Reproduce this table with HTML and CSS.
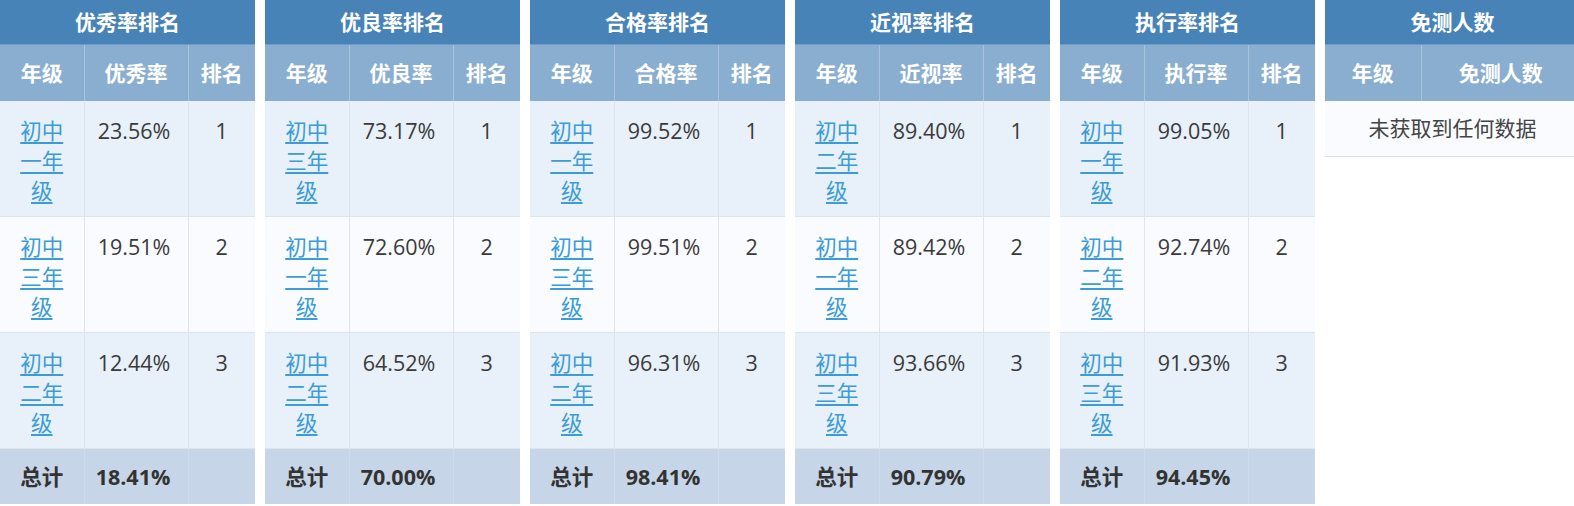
FILE: index.html
```html
<!DOCTYPE html>
<html lang="zh-CN">
<head>
<meta charset="utf-8">
<title>排名统计</title>
<link rel="stylesheet" href="styles.css">
</head>
<body>
<div class="boards">
  <table class="rank">
    <colgroup><col class="c-grade"><col class="c-rate"><col class="c-no"></colgroup>
    <thead>
      <tr class="title"><th colspan="3">优秀率排名</th></tr>
      <tr class="sub"><th>年级</th><th>优秀率</th><th>排名</th></tr>
    </thead>
    <tbody>
      <tr class="odd"><td><a href="#">初中一年级</a></td><td>23.56%</td><td>1</td></tr>
      <tr class="even"><td><a href="#">初中三年级</a></td><td>19.51%</td><td>2</td></tr>
      <tr class="odd"><td><a href="#">初中二年级</a></td><td>12.44%</td><td>3</td></tr>
      <tr class="total"><td>总计</td><td>18.41%</td><td></td></tr>
    </tbody>
  </table>
  <table class="rank">
    <colgroup><col class="c-grade"><col class="c-rate"><col class="c-no"></colgroup>
    <thead>
      <tr class="title"><th colspan="3">优良率排名</th></tr>
      <tr class="sub"><th>年级</th><th>优良率</th><th>排名</th></tr>
    </thead>
    <tbody>
      <tr class="odd"><td><a href="#">初中三年级</a></td><td>73.17%</td><td>1</td></tr>
      <tr class="even"><td><a href="#">初中一年级</a></td><td>72.60%</td><td>2</td></tr>
      <tr class="odd"><td><a href="#">初中二年级</a></td><td>64.52%</td><td>3</td></tr>
      <tr class="total"><td>总计</td><td>70.00%</td><td></td></tr>
    </tbody>
  </table>
  <table class="rank">
    <colgroup><col class="c-grade"><col class="c-rate"><col class="c-no"></colgroup>
    <thead>
      <tr class="title"><th colspan="3">合格率排名</th></tr>
      <tr class="sub"><th>年级</th><th>合格率</th><th>排名</th></tr>
    </thead>
    <tbody>
      <tr class="odd"><td><a href="#">初中一年级</a></td><td>99.52%</td><td>1</td></tr>
      <tr class="even"><td><a href="#">初中三年级</a></td><td>99.51%</td><td>2</td></tr>
      <tr class="odd"><td><a href="#">初中二年级</a></td><td>96.31%</td><td>3</td></tr>
      <tr class="total"><td>总计</td><td>98.41%</td><td></td></tr>
    </tbody>
  </table>
  <table class="rank">
    <colgroup><col class="c-grade"><col class="c-rate"><col class="c-no"></colgroup>
    <thead>
      <tr class="title"><th colspan="3">近视率排名</th></tr>
      <tr class="sub"><th>年级</th><th>近视率</th><th>排名</th></tr>
    </thead>
    <tbody>
      <tr class="odd"><td><a href="#">初中二年级</a></td><td>89.40%</td><td>1</td></tr>
      <tr class="even"><td><a href="#">初中一年级</a></td><td>89.42%</td><td>2</td></tr>
      <tr class="odd"><td><a href="#">初中三年级</a></td><td>93.66%</td><td>3</td></tr>
      <tr class="total"><td>总计</td><td>90.79%</td><td></td></tr>
    </tbody>
  </table>
  <table class="rank">
    <colgroup><col class="c-grade"><col class="c-rate"><col class="c-no"></colgroup>
    <thead>
      <tr class="title"><th colspan="3">执行率排名</th></tr>
      <tr class="sub"><th>年级</th><th>执行率</th><th>排名</th></tr>
    </thead>
    <tbody>
      <tr class="odd"><td><a href="#">初中一年级</a></td><td>99.05%</td><td>1</td></tr>
      <tr class="even"><td><a href="#">初中二年级</a></td><td>92.74%</td><td>2</td></tr>
      <tr class="odd"><td><a href="#">初中三年级</a></td><td>91.93%</td><td>3</td></tr>
      <tr class="total"><td>总计</td><td>94.45%</td><td></td></tr>
    </tbody>
  </table>
  <table class="rank exempt">
    <colgroup><col class="c-grade2"><col class="c-count"></colgroup>
    <thead>
      <tr class="title"><th colspan="2">免测人数</th></tr>
      <tr class="sub"><th>年级</th><th>免测人数</th></tr>
    </thead>
    <tbody>
      <tr class="empty"><td colspan="2">未获取到任何数据</td></tr>
    </tbody>
  </table>
</div>
</body>
</html>
```
FILE: styles.css
```css
html, body {
  margin: 0;
  padding: 0;
  background: #ffffff;
}

body {
  font-family: "Open Sans", "Noto Sans CJK SC", sans-serif;
  font-size: 21px;
  color: #3a3a3a;
  overflow: hidden;
}

.boards {
  display: flex;
  align-items: flex-start;
  gap: 10px;
  width: 1600px;
}

.rank {
  flex: 0 0 255px;
  width: 255px;
  table-layout: fixed;
  border-collapse: collapse;
  border-spacing: 0;
}

.c-grade { width: 84px; }
.c-rate { width: 104px; }
.c-no { width: 67px; }
.c-grade2 { width: 96px; }
.c-count { width: 159px; }

.rank th,
.rank td {
  text-align: center;
  padding: 0;
}

.title th {
  height: 44px;
  background: #4883b8;
  color: #ffffff;
  font-weight: 700;
  border-bottom: 1px solid #6f9cc6;
  line-height: 44px;
}

.sub th {
  height: 56px;
  background: #8aaed0;
  color: #ffffff;
  font-weight: 700;
  border-left: 1px solid #a8c3dd;
  line-height: 56px;
}

.sub th:first-child {
  border-left: none;
}

.odd td,
.even td {
  height: 90px;
  padding: 15px 19px 10px;
  line-height: 30px;
  font-size: 21.5px;
  vertical-align: top;
  border-left: 1px solid #dde4ec;
  border-bottom: 1px solid #dde4ec;
}

.odd td:nth-child(2),
.even td:nth-child(2) {
  padding-left: 4px;
  padding-right: 8px;
}

.odd td:first-child,
.even td:first-child {
  border-left: none;
}

.odd td { background: #e8f0f9; }
.even td { background: #f9fbfe; }

.rank a {
  color: #3b9cd6;
  text-decoration: underline;
  text-underline-offset: 3px;
}

.total td {
  height: 55px;
  background: #c6d6e8;
  font-weight: 700;
  color: #333333;
  line-height: 55px;
  font-size: 21.5px;
  border-left: 1px solid #cfdcea;
}

.total td:first-child {
  border-left: none;
}

.total td:nth-child(2) {
  padding-right: 6px;
}

.empty td {
  height: 55px;
  background: #f9fbfe;
  color: #444444;
  border-bottom: 1px solid #dde2e8;
  line-height: 55px;
}
```
